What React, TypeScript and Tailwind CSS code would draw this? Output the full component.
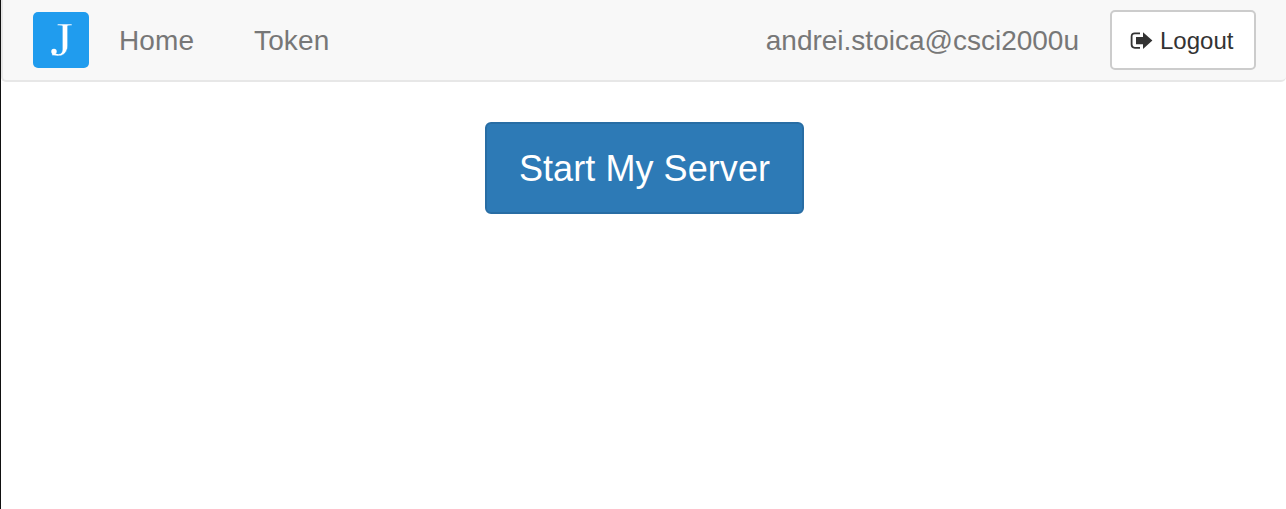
function Logo() {
  return (
    <svg className="block h-14 w-14 shrink-0" viewBox="0 0 56 56" role="img" aria-label="J">
      <rect width="56" height="56" rx="5" fill="#209cee" />
      <text
        transform="translate(17.8 44.2) scale(1.2 1)"
        fontFamily="'Liberation Serif', serif"
        fontSize="48"
        fill="#fff"
        stroke="#209cee"
        strokeWidth="0.4"
      >
        J
      </text>
      <circle cx="21" cy="39.4" r="2.7" fill="#fff" />
    </svg>
  );
}

function LogoutIcon() {
  return (
    <svg className="mt-0.5 block h-[18px] w-[23px]" viewBox="0 0 23 18" aria-hidden="true">
      <path d="M10 1.3H4.8Q1.6 1.3 1.6 4.5V12.6Q1.6 15.8 4.8 15.8H10" fill="none" stroke="#333" strokeWidth="1.8" />
      <path d="M6 4.9H13V.2L22.4 8.5L13 16.9V12.2H6Z" fill="#333" />
    </svg>
  );
}

export default function App() {
  return (
    <div className="h-[509px] overflow-hidden border-l border-[#111] bg-white font-['Liberation_Sans',Arial,sans-serif]">
      <nav className="flex h-[82px] items-start rounded-b-[5px] border-b-2 border-l-2 border-[#e7e7e7] bg-[#f8f8f8] pl-[30px] text-[28px] leading-10 text-[#777]">
        <div className="pt-3">
          <Logo />
        </div>
        <a className="ml-[30px] pt-[21px] tracking-[0.1px]">Home</a>
        <a className="ml-[60px] pt-[21px] tracking-[0.1px]">Token</a>
        <div className="ml-auto flex items-start pr-[30px]">
          <span className="pt-[21px]">andrei.stoica@csci2000u</span>
          <button className="mt-2.5 ml-[31px] flex h-[60px] w-[146px] items-center gap-[7px] rounded-[5px] border-2 border-[#ccc] bg-white pl-[18px] text-2xl text-[#333]">
            <LogoutIcon />
            <span className="pt-0.5">Logout</span>
          </button>
        </div>
      </nav>
      <main className="flex justify-center pt-10 pl-0.5">
        <button className="h-[92px] w-[319px] rounded-md border-2 border-[#286da4] bg-[#2d7ab6] pt-0.5 text-4xl tracking-[0.07px] text-white">
          Start My Server
        </button>
      </main>
    </div>
  );
}
